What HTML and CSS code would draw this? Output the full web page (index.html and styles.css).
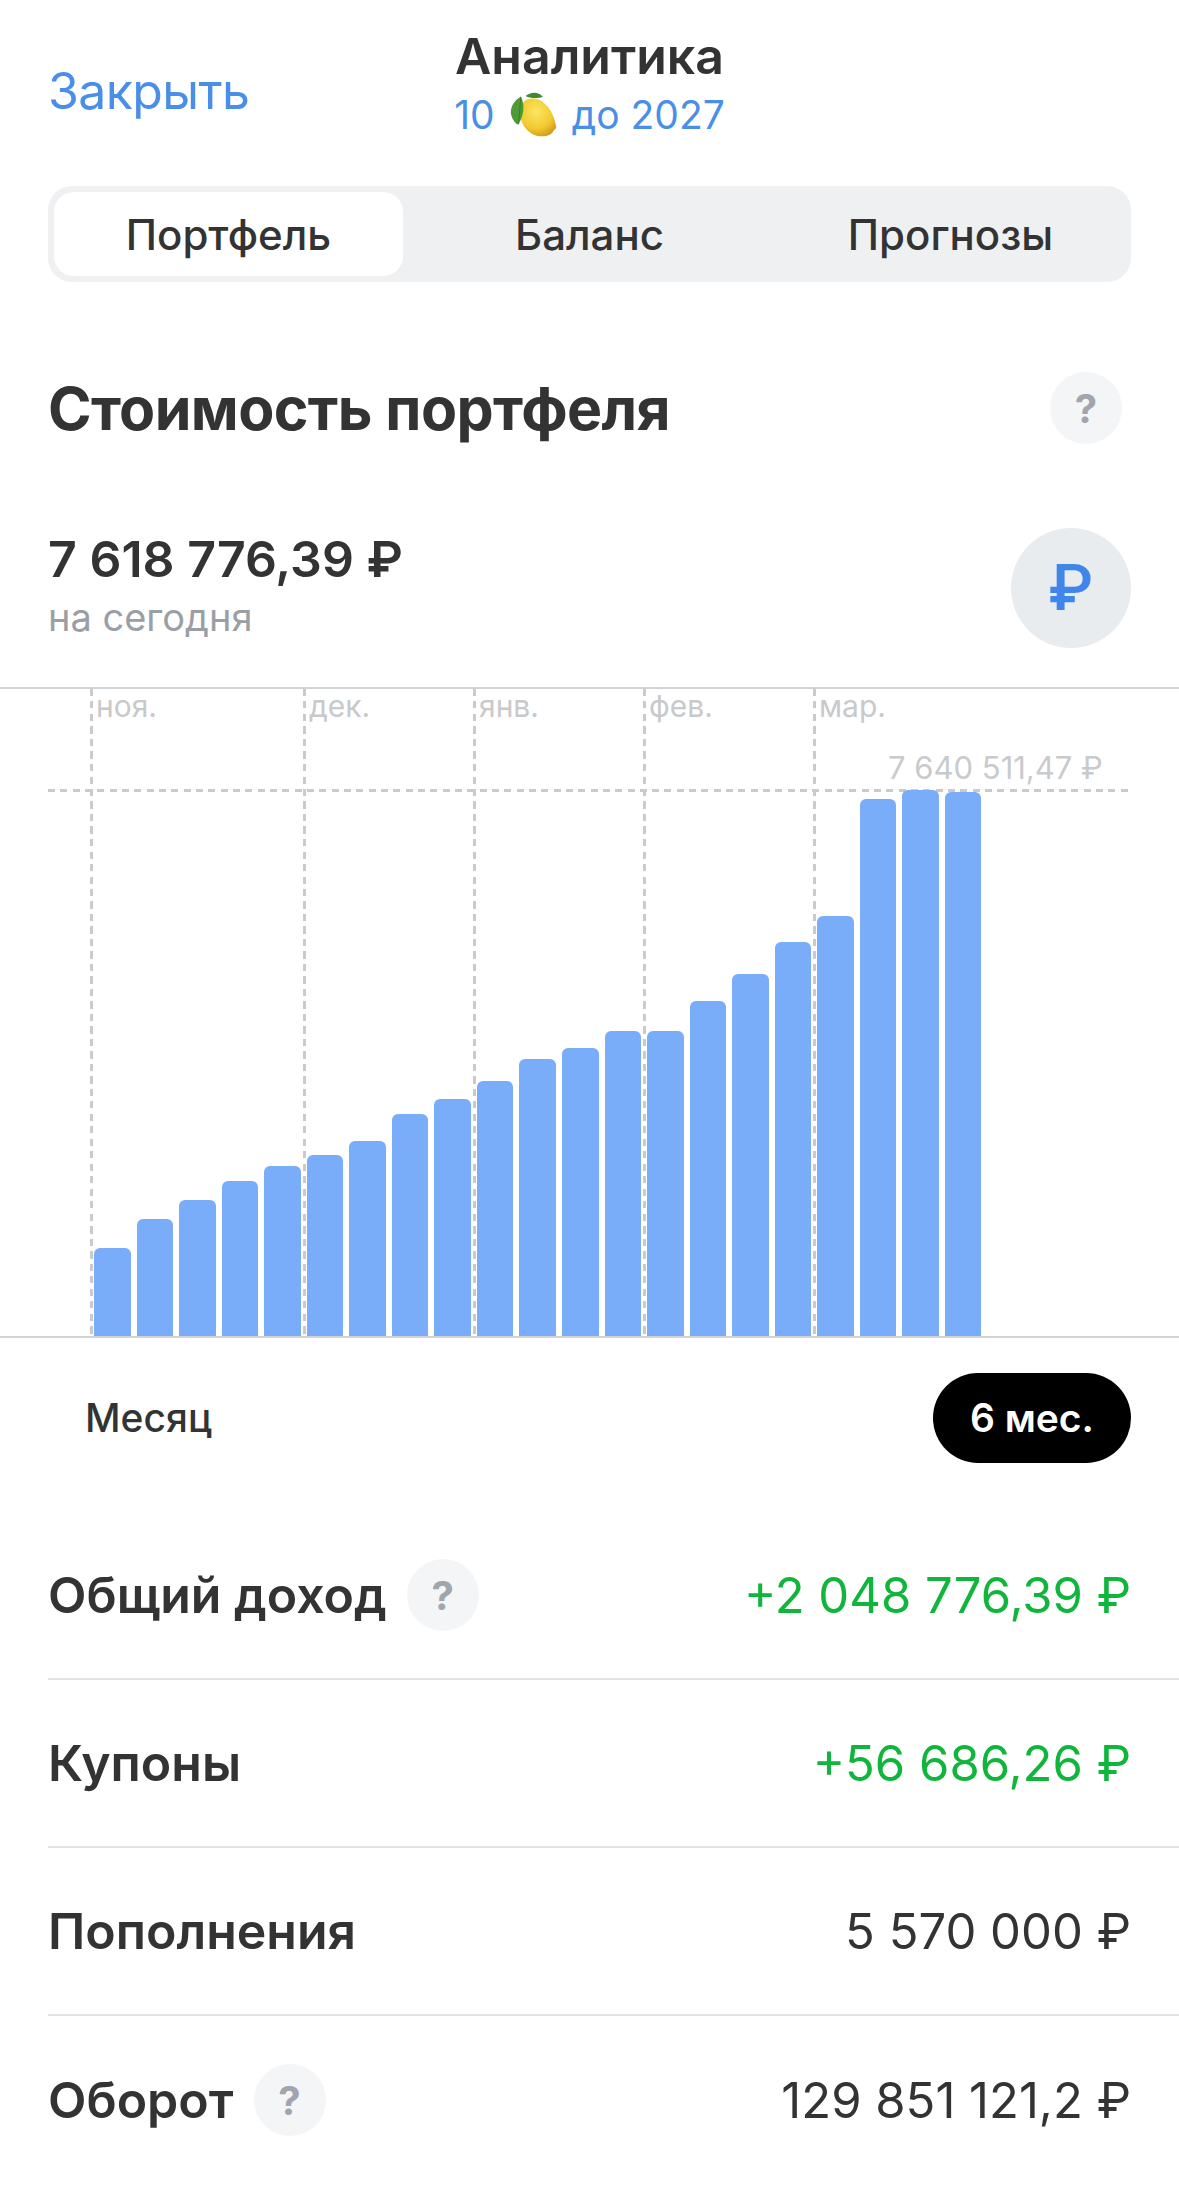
FILE: index.html
```html
<!DOCTYPE html>
<html lang="ru">
<head>
    <meta charset="UTF-8">
    <meta name="viewport" content="width=device-width, initial-scale=1.0">
    <title>Аналитика</title>
    <link rel="stylesheet" href="styles.css">
</head>
<body>
    <header class="header">
        <a class="close-link">Закрыть</a>
        <div class="header-title">
            <div class="title">Аналитика</div>
            <div class="subtitle">
                <span>10</span>
                <svg class="lemon" viewBox="0 0 140 135">
                    <defs>
                        <radialGradient id="lemon-fill" cx="0.45" cy="0.35" r="0.75">
                            <stop offset="0" stop-color="#fbe663"/>
                            <stop offset="0.6" stop-color="#f2c92f"/>
                            <stop offset="1" stop-color="#c98f18"/>
                        </radialGradient>
                    </defs>
                    <path d="M30 52 C34 24 62 12 88 24 C114 36 132 68 138 104 C139 112 132 112 130 116 C126 126 112 134 90 133 C56 132 24 92 30 52 Z" fill="url(#lemon-fill)"/>
                    <path d="M32 14 C12 24 -2 48 3 68 C7 84 18 98 25 97 C40 72 46 40 32 14 Z" fill="#4e9a35"/>
                    <path d="M32 14 C30 40 28 70 25 97" stroke="#2f6d20" stroke-width="2" fill="none"/>
                    <path d="M46 12 C60 0 84 -3 98 14 C80 21 60 19 46 12 Z" fill="#3f8a2c"/>
                </svg>
                <span>до 2027</span>
            </div>
        </div>
    </header>

    <div class="tabs">
        <div class="tab tab-active">Портфель</div>
        <div class="tab">Баланс</div>
        <div class="tab">Прогнозы</div>
    </div>

    <div class="section-head">
        <h1>Стоимость портфеля</h1>
        <span class="help">?</span>
    </div>

    <div class="total">
        <div class="total-text">
            <div class="total-value">7 618 776,39 ₽</div>
            <div class="total-note">на сегодня</div>
        </div>
        <div class="currency">₽</div>
    </div>

    <div class="chart">
        <div class="month" style="left: 90px">ноя.</div>
        <div class="month" style="left: 303px">дек.</div>
        <div class="month" style="left: 473px">янв.</div>
        <div class="month" style="left: 643px">фев.</div>
        <div class="month" style="left: 813px">мар.</div>
        <div class="peak-line"></div>
        <div class="peak-label">7 640 511,47 ₽</div>
        <div class="bars">
            <div class="bar" style="height: 88px"></div>
            <div class="bar" style="height: 117px"></div>
            <div class="bar" style="height: 136px"></div>
            <div class="bar" style="height: 155px"></div>
            <div class="bar" style="height: 170px"></div>
            <div class="bar" style="height: 181px"></div>
            <div class="bar" style="height: 195px"></div>
            <div class="bar" style="height: 222px"></div>
            <div class="bar" style="height: 237px"></div>
            <div class="bar" style="height: 255px"></div>
            <div class="bar" style="height: 277px"></div>
            <div class="bar" style="height: 288px"></div>
            <div class="bar" style="height: 305px"></div>
            <div class="bar" style="height: 305px"></div>
            <div class="bar" style="height: 335px"></div>
            <div class="bar" style="height: 362px"></div>
            <div class="bar" style="height: 394px"></div>
            <div class="bar" style="height: 420px"></div>
            <div class="bar" style="height: 537px"></div>
            <div class="bar" style="height: 546px"></div>
            <div class="bar" style="height: 544px"></div>
        </div>
    </div>

    <div class="ranges">
        <div class="range">Месяц</div>
        <div class="range range-active">6 мес.</div>
    </div>

    <div class="rows">
        <div class="row">
            <div class="row-label">Общий доход <span class="help">?</span></div>
            <div class="row-value positive">+2 048 776,39 ₽</div>
        </div>
        <div class="row">
            <div class="row-label">Купоны</div>
            <div class="row-value positive">+56 686,26 ₽</div>
        </div>
        <div class="row">
            <div class="row-label">Пополнения</div>
            <div class="row-value">5 570 000 ₽</div>
        </div>
        <div class="row">
            <div class="row-label">Оборот <span class="help">?</span></div>
            <div class="row-value">129 851 121,2 ₽</div>
        </div>
    </div>
</body>
</html>
```

FILE: styles.css
```css
* {
    box-sizing: border-box;
}
body {
    margin: 0;
    width: 1179px;
    height: 2209px;
    overflow: hidden;
    background-color: #fff;
    color: #333;
    font-family: Inter, "Noto Sans", sans-serif;
}
.header {
    display: grid;
    grid-template-columns: 1fr auto 1fr;
    align-items: center;
    height: 186px;
    padding: 0 48px 12px;
}
.close-link {
    position: relative;
    top: 4px;
    color: #4a8fe7;
    font-size: 50px;
    letter-spacing: -0.6px;
}
.header-title {
    margin-top: -6px;
    text-align: center;
}
.title {
    font-size: 50px;
    font-weight: 600;
    line-height: 58px;
}
.subtitle {
    display: flex;
    align-items: center;
    justify-content: center;
    gap: 15px;
    height: 54px;
    margin-top: 2px;
    color: #4a8fe7;
    font-size: 39px;
}
.lemon {
    width: 47px;
    height: 45px;
}
.tabs {
    display: flex;
    height: 96px;
    margin: 0 48px;
    padding: 6px 0 6px 6px;
    background-color: #eff0f2;
    border-radius: 24px;
}
.tab {
    flex: 1;
    display: flex;
    align-items: center;
    justify-content: center;
    border-radius: 20px;
    font-size: 42px;
    font-weight: 500;
}
.tab-active {
    flex: none;
    width: 349px;
    margin-right: 6px;
    background-color: #fff;
}
.section-head {
    display: flex;
    align-items: center;
    justify-content: space-between;
    margin-top: 90px;
    padding: 0 57px 0 48px;
}
h1 {
    margin: 0;
    font-size: 59px;
    font-weight: 700;
    letter-spacing: -0.6px;
}
.help {
    display: inline-flex;
    align-items: center;
    justify-content: center;
    flex: none;
    width: 72px;
    height: 72px;
    background-color: #f4f5f7;
    border-radius: 50%;
    color: #a0a5ae;
    font-size: 40px;
    font-weight: 700;
}
.total {
    display: flex;
    align-items: center;
    justify-content: space-between;
    margin-top: 84px;
    padding: 0 48px;
}
.total-text {
    margin-bottom: 6px;
}
.total-value {
    font-size: 50px;
    font-weight: 600;
    line-height: 58px;
}
.total-note {
    margin-top: 6px;
    color: #9a9fa6;
    font-size: 38px;
}
.currency {
    display: flex;
    align-items: center;
    justify-content: center;
    width: 120px;
    height: 120px;
    background-color: #e9ecee;
    border-radius: 50%;
    color: #3f86ea;
    font-family: Roboto, sans-serif;
    font-size: 64px;
    font-weight: 500;
}
.chart {
    position: relative;
    height: 651px;
    margin-top: 39px;
    border-top: 2px solid #d2d3d5;
    border-bottom: 2px solid #d2d3d5;
}
.month {
    position: absolute;
    top: 0;
    bottom: 0;
    padding: 0 0 0 6px;
    background: repeating-linear-gradient(to bottom, #c9cacc 0, #c9cacc 7px, transparent 7px, transparent 12.5px) left top / 3px 100% no-repeat;
    color: #c8c9cb;
    font-size: 30px;
    line-height: 34px;
}
.peak-line {
    position: absolute;
    top: 100px;
    left: 48px;
    width: 1083px;
    height: 3px;
    background: repeating-linear-gradient(to right, #c9cacc 0, #c9cacc 7px, transparent 7px, transparent 12.33px);
}
.peak-label {
    position: absolute;
    top: 60px;
    left: 888px;
    color: #c9cacc;
    font-size: 31px;
}
.bars {
    position: absolute;
    left: 94px;
    bottom: 0;
    display: flex;
    align-items: flex-end;
    gap: 6px;
}
.bar {
    width: 36.55px;
    background-color: #7aadf9;
    border-radius: 6px 6px 0 0;
}
.ranges {
    display: flex;
    align-items: center;
    justify-content: space-between;
    margin-top: 35px;
    padding: 0 48px;
}
.range {
    padding: 0 37px;
    height: 90px;
    line-height: 90px;
    font-size: 39px;
    font-weight: 500;
}
.range-active {
    background-color: #000;
    border-radius: 45px;
    color: #fff;
    font-weight: 600;
}
.rows {
    margin: 49px 0 0 48px;
}
.row {
    display: flex;
    align-items: center;
    justify-content: space-between;
    height: 168px;
    padding-right: 48px;
    border-bottom: 2px solid #e2e3e5;
}
.row:last-child {
    border-bottom: none;
}
.row-label {
    display: flex;
    align-items: center;
    gap: 20px;
    font-size: 50px;
    font-weight: 600;
}
.row-value {
    font-size: 49px;
}
.positive {
    color: #10b53c;
}
```
